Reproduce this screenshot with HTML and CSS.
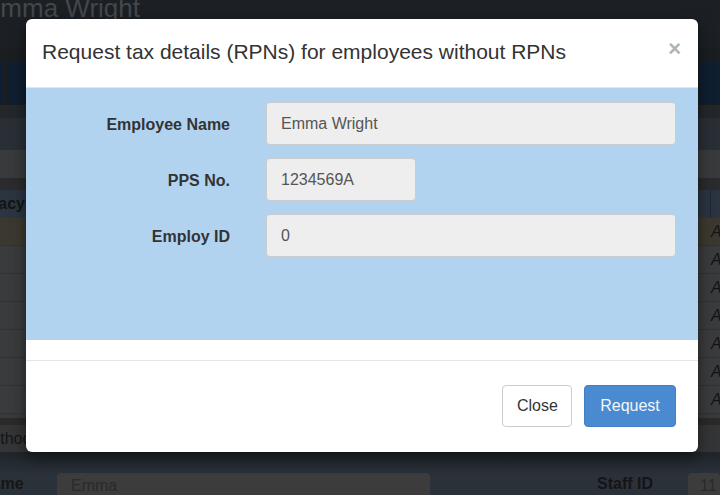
FILE: index.html
```html
<!DOCTYPE html>
<html lang="en">
<head>
<meta charset="utf-8">
<title>Request tax details</title>
<link rel="stylesheet" href="styles.css">
</head>
<body>
<div class="page">
  <div class="pg-title"><h1 class="pg-name">Emma Wright</h1></div>
  <div class="pg-toolbar">
    <span class="tb-btn tb-a"></span>
    <span class="tb-btn tb-b"></span>
    <span class="tb-spacer"></span>
    <span class="tb-btn tb-c"></span>
  </div>
  <div class="band band-1"></div>
  <div class="band band-2"></div>
  <div class="band band-3"></div>
  <div class="band band-4"></div>
  <div class="tbl">
    <div class="tr th"><span class="c-first"><span class="shift-privacy">Privacy</span></span><span class="c-last"></span></div>
    <div class="tr tr-hl"><span class="c-first"></span><span class="c-last">A</span></div>
    <div class="tr"><span class="c-first"></span><span class="c-last">A</span></div>
    <div class="tr"><span class="c-first"></span><span class="c-last">A</span></div>
    <div class="tr"><span class="c-first"></span><span class="c-last">A</span></div>
    <div class="tr"><span class="c-first"></span><span class="c-last">A</span></div>
    <div class="tr"><span class="c-first"></span><span class="c-last">A</span></div>
    <div class="tr"><span class="c-first"></span><span class="c-last">A</span></div>
  </div>
  <div class="band band-5"></div>
  <div class="band band-6"></div>
  <div class="method-row"><span class="shift-method">Method</span></div>
  <div class="pg-form">
    <span class="f-label f-name"><span class="shift-name">Name</span></span>
    <span class="f-input f-input-wide">Emma</span>
    <span class="f-label f-staff">Staff ID</span>
    <span class="f-input f-input-narrow">11</span>
  </div>
</div>

<div class="modal" role="dialog">
  <div class="modal-header">
    <h4 class="modal-title">Request tax details (RPNs) for employees without RPNs</h4>
    <button class="modal-close" type="button">&times;</button>
  </div>
  <div class="modal-body">
    <label class="m-label">Employee Name</label>
    <div class="m-field"><span class="m-input">Emma Wright</span></div>
    <label class="m-label">PPS No.</label>
    <div class="m-field"><span class="m-input m-input-short">1234569A</span></div>
    <label class="m-label">Employ ID</label>
    <div class="m-field"><span class="m-input">0</span></div>
  </div>
  <div class="modal-gap"></div>
  <div class="modal-footer">
    <button class="btn btn-default" type="button">Close</button>
    <button class="btn btn-primary" type="button">Request</button>
  </div>
</div>
</body>
</html>
```

FILE: styles.css
```css
* { box-sizing: border-box; }
html, body { margin: 0; padding: 0; }
body {
  width: 720px;
  height: 495px;
  overflow: hidden;
  background: #1b1e21;
  font-family: "Liberation Sans", Arial, sans-serif;
  position: relative;
}

/* ---------- dimmed background page ---------- */
.page { width: 720px; }
.pg-title { height: 48px; background: #1c2024; overflow: hidden; }
.pg-name {
  margin: -5px 0 0 -17px;
  font-size: 26px;
  line-height: 26px;
  font-weight: normal;
  color: #43484d;
}
.pg-toolbar {
  height: 57px;
  background: #1b1e21;
  display: flex;
  align-items: flex-end;
  padding-bottom: 1px;
}
.tb-btn { height: 42px; background: #0f1e31; border-radius: 4px; }
.tb-a { width: 8px; margin-left: -5px; }
.tb-b { width: 60px; margin-left: 4px; }
.tb-spacer { flex: 1; }
.tb-c { width: 30px; margin-right: -10px; }
.band-1 { height: 13px; background: #23272b; }
.band-2 { height: 32px; background: #2a2f36; }
.band-3 { height: 28px; background: #393a3b; }
.band-4 { height: 12px; background: #2a2b2c; }
.band-5 { height: 4px; background: #393a3b; }
.band-6 { height: 7px; background: #2a2a2a; }

.tbl { display: flex; flex-direction: column; }
.tr {
  height: 28px;
  display: flex;
  background: #3a3b3d;
  border-bottom: 1px solid #313234;
  font-size: 16px;
  color: #141414;
}
.th { background: #2b3541; font-weight: bold; border-bottom: 0; }
.tr-hl { background: #3b392f; }
.c-first { flex: 1; display: flex; align-items: center; overflow: hidden; }
.c-last {
  width: 10px;
  display: flex;
  align-items: center;
  padding-left: 1px;
  font-style: italic;
  overflow: hidden;
}
.th .c-last { border-left: 1px solid #1d2430; }
.shift-privacy { margin-left: -32px; }
.method-row {
  height: 27px;
  background: #343536;
  display: flex;
  align-items: center;
  font-size: 16px;
  color: #151515;
  overflow: hidden;
}
.shift-method { margin-left: -22px; }
.pg-form {
  height: 43px;
  background: linear-gradient(#1f2429, #2a3139 22px);
  display: flex;
  align-items: flex-end;
  font-size: 16px;
  color: #151515;
  overflow: hidden;
}
.f-label { font-weight: bold; padding-bottom: 2px; }
.f-name { width: 57px; overflow: hidden; }
.shift-name { margin-left: -20px; }
.f-input {
  height: 22px;
  background: #3c3c3c;
  border-radius: 4px 4px 0 0;
  padding: 4px 0 0 14px;
  color: #2a2a2a;
}
.f-input-wide { width: 373px; }
.f-staff { margin-left: 167px; width: 91px; }
.f-input-narrow { width: 32px; padding-left: 12px; }

/* ---------- modal ---------- */
.modal {
  position: absolute;
  left: 26px;
  top: 19px;
  width: 672px;
  background: #fff;
  border-radius: 6px;
  box-shadow: 0 5px 15px rgba(0, 0, 0, .5);
  overflow: hidden;
}
.modal-header {
  height: 69px;
  border-bottom: 1px solid #e5e5e5;
  display: flex;
  align-items: center;
  padding: 0 17px 2px 16px;
}
.modal-title {
  flex: 1;
  margin: 0;
  font-size: 21px;
  font-weight: normal;
  color: #333;
  line-height: 1.2;
}
.modal-close {
  border: 0;
  background: none;
  padding: 0;
  margin-top: -6px;
  font-family: "Liberation Sans", Arial, sans-serif;
  font-size: 22px;
  font-weight: bold;
  line-height: 1;
  color: #b3b3b3;
}
.modal-body {
  background: #b1d3f0;
  display: grid;
  grid-template-columns: 204px 1fr;
  column-gap: 36px;
  row-gap: 13px;
  padding: 14px 22px 83px 0;
}
.m-label {
  text-align: right;
  font-size: 16px;
  font-weight: bold;
  color: #333;
  align-self: center;
  padding-top: 2px;
}
.m-field { display: flex; }
.m-input {
  flex: 1;
  height: 43px;
  display: flex;
  align-items: center;
  padding: 0 14px;
  background: #eee;
  border: 1px solid #ccc;
  border-radius: 4px;
  font-size: 16px;
  color: #555;
}
.m-input-short { flex: 0 0 150px; }
.modal-gap { height: 20px; }
.modal-footer {
  border-top: 1px solid #e5e5e5;
  display: flex;
  justify-content: flex-end;
  gap: 12px;
  padding: 24px 22px 25px;
}
.btn {
  height: 42px;
  padding: 0 14px;
  border-radius: 4px;
  font-family: "Liberation Sans", Arial, sans-serif;
  font-size: 16px;
  border: 1px solid transparent;
}
.btn-default { background: #fff; border-color: #ccc; color: #333; width: 70px; }
.btn-primary { background: #4a8ad0; border-color: #3f7fc4; color: #f2f6fb; width: 92px; }
```
